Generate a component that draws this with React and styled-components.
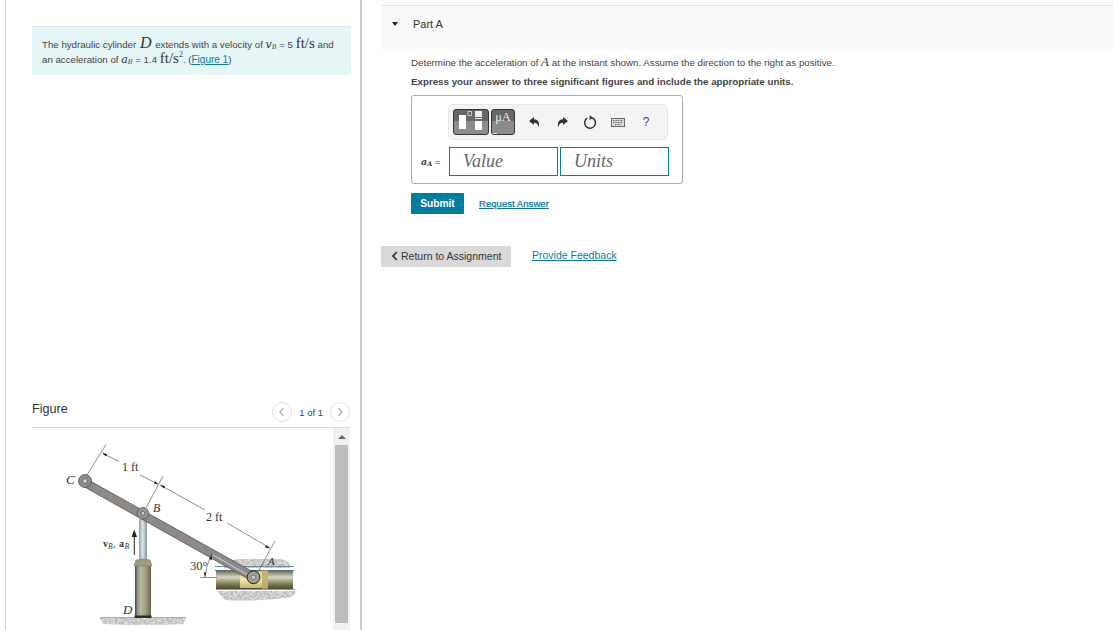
import React from "react";
import styled, { createGlobalStyle } from "styled-components";

const Global = createGlobalStyle`
  html, body { margin: 0; padding: 0; background: #fff; height: 630px; overflow: hidden; }
  body { font-family: "Liberation Sans", Arial, sans-serif; color: #333; }
`;
const Page = styled.div`display: flex; width: 1113px; height: 630px; overflow: hidden;`;
const LeftPane = styled.section`
  margin-left: 5px; width: 357px; height: 630px; box-sizing: border-box; flex: none;
  border-left: 1px solid #d3d7dc; border-right: 2px solid #c5ccd8;
  padding: 26px 9px 0 26px;
`;
const InfoBox = styled.div`
  height: 49px; box-sizing: border-box; background: #e6f5f6; border-top: 1px solid #dfe5e8;
  padding: 10px 10px 0 10px; font-size: 9.7px; line-height: 15px; color: #444; white-space: nowrap;
`;
const MathBig = styled.span`font-family: "Liberation Serif", serif; font-size: ${p => p.$size || "15px"}; font-style: ${p => p.$i ? "italic" : "normal"}; color: #333; margin: 0 ${p => p.$gap || 0}px; line-height: 0;`;
const MathVar = styled.span`font-family: "DejaVu Serif", serif; font-style: italic; font-size: 11px; color: #333; line-height: 0; sub { font-size: 6.5px; vertical-align: -1px; line-height: 0; }`;
const Sup = styled.sup`font-size: 8px; line-height: 0;`;
const Link = styled.a`color: #0a7a9b; text-decoration: underline; font-size: ${p => p.$size || "10px"}; font-weight: 400; -webkit-text-stroke: ${p => p.$bold ? ".25px #0a7a9b" : "0"}; margin-bottom: ${p => p.$lift || 0}px;`;
const FigureHeader = styled.header`
  margin-top: 326px; height: 27px; box-sizing: border-box; display: flex; align-items: flex-start;
  border-bottom: 1px solid #d9d9d9; width: 318px; justify-content: space-between;
`;
const FigureTitle = styled.h2`margin: 1px 0 0; font-size: 12.6px; font-weight: 400; color: #333; line-height: 15px;`;
const Pager = styled.div`display: flex; align-items: center; gap: 7px; font-size: 9.5px; color: #444; margin-top: 1px;`;
const PageBtn = styled.span`
  width: 20px; height: 20px; box-sizing: border-box; border: 1px solid #e0e0e0; border-radius: 50%;
  display: flex; align-items: center; justify-content: center;
`;
const FigureBody = styled.div`display: flex; width: 318px; height: 203px; overflow: hidden;`;
const FigureArea = styled.div`width: 301px; flex: none;`;
const Scrollbar = styled.div`width: 17px; background: #f1f1f1; display: flex; flex-direction: column; align-items: center;`;
const ScrollUp = styled.div`
  margin-top: 7px; width: 0; height: 0; border-left: 4px solid transparent; border-right: 4px solid transparent;
  border-bottom: 4px solid #666;
`;
const ScrollThumb = styled.div`margin-top: 6px; width: 13px; height: 178px; background: #bdbdbd;`;

const RightPane = styled.main`flex: 1; padding: 5px 0 0 19px; min-width: 0;`;
const PartBar = styled.div`
  height: 44px; box-sizing: border-box; background: #f9f9f9; border-top: 1px solid #e6e6e6;
  display: flex; align-items: flex-start; padding: 11px 0 0 11px;
`;
const Caret = styled.span`
  width: 0; height: 0; border-left: 3.5px solid transparent; border-right: 3.5px solid transparent;
  border-top: 4px solid #222; margin-top: 5px;
`;
const PartTitle = styled.h3`margin: 0 0 0 15px; font-size: 11px; font-weight: 400; color: #333; line-height: 14px;`;
const PartBody = styled.div`padding: 6px 0 0 30px;`;
const Prompt = styled.p`margin: 0; height: 15px; font-size: 9.75px; line-height: 15px; color: #444; white-space: nowrap;`;
const Instruction = styled.p`margin: 4px 0 0; font-size: 9.75px; line-height: 15px; font-weight: 700; color: #444; white-space: nowrap;`;
const AnswerBox = styled.div`
  margin-top: 6px; width: 272px; height: 89px; box-sizing: border-box; border: 1px solid #aaa; border-radius: 3px;
  padding: 8px 0 0 36px;
`;
const Toolbar = styled.div`
  width: 220px; height: 36px; box-sizing: border-box; background: #f4f4f4; border: 1px solid #e6e6e6; border-radius: 5px;
  display: flex; align-items: center; padding-left: 4px;
`;
const TplBtn = styled.div`
  width: ${p => p.$w}px; height: 26px; box-sizing: border-box; border: 1px solid #333; border-radius: 3px; margin-right: 2px;
  background: linear-gradient(#666 0, #666 44%, #8c8c8c 44%, #8c8c8c 100%);
  display: flex; align-items: center; justify-content: center; overflow: hidden; flex: none; position: relative;
`;
const MuText = styled.span`font-family: "Liberation Serif", serif; font-size: 12.5px; color: #f0f0f0; margin-top: -9px;`;
const MuMark = styled.span`position: absolute; left: 1px; bottom: 0; width: 4px; height: 1px; background: #eee;`;
const ToolIcon = styled.span`
  width: 28px; height: 26px; flex: none; display: flex; align-items: center; justify-content: center; color: #444;
  font-size: 12px;
`;
const Icons = styled.div`display: flex; margin-left: 3px;`;
const InputRow = styled.div`display: flex; align-items: center; margin-top: 7px; margin-left: -27px;`;
const VarLabel = styled.span`width: 28px; font-size: 9.5px; color: #444; white-space: nowrap; sub { font-size: 6.5px; line-height: 0; vertical-align: -1px; } i { font-family: "DejaVu Serif", serif; font-weight: 700; }`;
const Field = styled.div`
  width: ${p => p.$w}px; height: 29px; box-sizing: border-box; border: 1px solid #0e7c98; margin-right: 2px; flex: none;
  font-family: "Liberation Serif", "DejaVu Serif", serif; font-style: italic; font-size: 18px; color: #666; padding: 3px 0 0 13px; background: #fff;
`;
const SubmitRow = styled.div`display: flex; align-items: center; margin-top: 9px;`;
const Submit = styled.button`
  width: 53px; height: 21px; border: 0; padding: 0; border-radius: 1px; background: #007c9c; color: #fff; font: 700 10.2px "Liberation Sans", sans-serif;
  margin-right: 15px;
`;
const BottomRow = styled.div`display: flex; align-items: center; margin-top: 32px;`;
const ReturnBtn = styled.button`
  width: 130px; height: 21px; border: 0; border-radius: 1px; background: #d9d9d9; color: #333; padding: 0 0 1px 10px;
  font: 400 10.5px "Liberation Sans", sans-serif; display: flex; align-items: center; gap: 2px; margin-right: 21px;
`;

function Diagram() {
  const T = ({ x, y, it, size = 11.5, children, w }) => (
    <text x={x} y={y} fontFamily="'Liberation Serif', serif" fontStyle={it ? "italic" : "normal"} fontSize={size} fontWeight={w} fill="#333">{children}</text>
  );
  return (
    <svg width="301" height="203" viewBox="32 428 301 203" style={{ display: "block" }}>
      <defs>
        <linearGradient id="rod" x1="0" x2="1" y1="0" y2="0">
          <stop offset="0" stopColor="#8fa0a8" /><stop offset=".45" stopColor="#dde5e8" /><stop offset="1" stopColor="#84929a" />
        </linearGradient>
        <linearGradient id="cyl" x1="0" x2="1" y1="0" y2="0">
          <stop offset="0" stopColor="#76765c" /><stop offset=".35" stopColor="#bab8a0" /><stop offset=".7" stopColor="#9c9a7e" /><stop offset="1" stopColor="#66644c" />
        </linearGradient>
        <linearGradient id="track" x1="0" x2="0" y1="0" y2="1">
          <stop offset="0" stopColor="#6e7258" /><stop offset=".35" stopColor="#d7d7c6" /><stop offset=".7" stopColor="#83805a" /><stop offset="1" stopColor="#4e4a2c" />
        </linearGradient>
        <linearGradient id="slide" x1="0" x2="0" y1="0" y2="1">
          <stop offset="0" stopColor="#d9cc8c" /><stop offset=".5" stopColor="#f3e7ae" /><stop offset="1" stopColor="#c9b66c" />
        </linearGradient>
        <filter id="speck" x="-5%" y="-30%" width="110%" height="160%">
          <feGaussianBlur in="SourceGraphic" stdDeviation=".7" result="soft" />
          <feTurbulence type="fractalNoise" baseFrequency="0.45" numOctaves="2" seed="7" result="noise" />
          <feColorMatrix in="noise" values="0 0 0 0 .95  0 0 0 0 .95  0 0 0 0 .95  0 0 0 1.6 -.55" result="light" />
          <feComposite in="light" in2="soft" operator="in" result="spots" />
          <feMerge><feMergeNode in="soft" /><feMergeNode in="spots" /></feMerge>
        </filter>
      </defs>

      <g filter="url(#speck)" fill="#b9b9b9">
        <path d="M100 618 H186 L183 624 Q143 626 103 624 Z" />
        <path d="M224 568 Q226 560 240 559 H280 Q290 560 291 568 Z" />
        <path d="M217 591 H297 L292 597 Q260 602 225 600 Z" />
      </g>
      <rect x="100" y="617" width="86" height="1" fill="#aaa" />
      <rect x="215" y="566" width="79" height="1" fill="#6d8a9a" />
      <rect x="215" y="570" width="79" height="1" fill="#556b78" />
      <rect x="216" y="571" width="77" height="18" fill="url(#track)" />
      <rect x="216" y="589" width="79" height="1" fill="#8d9ba3" />
      <rect x="240" y="571" width="28" height="17" fill="url(#slide)" />
      <rect x="262" y="570" width="6" height="19" fill="#b8a76a" opacity=".8" />

      <rect x="139" y="519" width="8" height="42" fill="url(#rod)" />
      <rect x="135" y="564" width="16" height="52" fill="url(#cyl)" />
      <rect x="135" y="565" width="1.4" height="51" fill="#3c4f86" />
      <path d="M136 560 Q143 558 150 560 L152 566 L134 566 Z" fill="#a09e80" stroke="#77755b" strokeWidth=".5" />
      <rect x="134.5" y="615.5" width="17" height="2.5" fill="#2f2f22" />

      <path d="M83 477 L255 573 L252 581 L81 485 Z" fill="#8e8a87" stroke="#55524f" strokeWidth=".8" />
      <path d="M213 555 L248 575" stroke="#d9d7d3" strokeWidth="1" />
      <circle cx="85" cy="481" r="6.5" fill="#8e8a87" stroke="#55524f" strokeWidth=".8" />
      <circle cx="85" cy="481" r="2.2" fill="#ddd" stroke="#444" strokeWidth=".6" />
      <circle cx="143" cy="513.3" r="5.8" fill="#97938f" stroke="#55524f" strokeWidth=".7" />
      <circle cx="143" cy="513.3" r="1.8" fill="#ddd" stroke="#444" strokeWidth=".6" />
      <circle cx="253.5" cy="577.3" r="6.4" fill="#a09d99" stroke="#222" strokeWidth="1" />
      <circle cx="253.5" cy="577.3" r="2.2" fill="#ccc" stroke="#555" strokeWidth=".6" />

      <g stroke="#444" strokeWidth=".6" fill="none">
        <path d="M87 475 L106 444.5" />
        <path d="M146 508 L163 476" />
        <path d="M258 572 L275 541" />
        <path d="M103 453.5 L119 461.5" />
        <path d="M140 475 L158 484" />
        <path d="M160 485 L205 510" />
        <path d="M227 523 L270 548" />
        <path d="M212 554 Q206 565 205 577" />
        <path d="M200 577.5 L217 577.5" />
      </g>
      <g fill="#222">
        <path d="M102 453 L107 454 L106 456.5 Z" />
        <path d="M158.5 484.5 L154 483.5 L155 481 Z" />
        <path d="M160 485 L165 486 L164 488.5 Z" />
        <path d="M270 548.5 L265 547.5 L266 545 Z" />
        <path d="M211.5 555 L212 560 L209 559 Z" />
        <path d="M205 577 L203.7 572.5 L206.3 572.5 Z" />
      </g>
      <path d="M134.3 555 V535" stroke="#222" strokeWidth="1" />
      <path d="M134.3 529.5 L137 537 L131.6 537 Z" fill="#222" />

      <T x={122} y={471} size={12}>1 ft</T>
      <T x={206} y={521} size={12}>2 ft</T>
      <T x={190} y={570} size={12.5}>30°</T>
      <T x={66} y={484} it size={13}>C</T>
      <T x={153} y={512} it size={12}>B</T>
      <T x={123} y={614} it size={13}>D</T>
      <T x={268} y={565} it size={11}>A</T>
      <T x={103} y={547} size={10} w="700">v</T>
      <T x={108} y={549} size={7.5} it>B</T>
      <T x={113} y={547} size={10}>,</T>
      <T x={119} y={547} size={10} w="700">a</T>
      <T x={124.5} y={549} size={7.5} it>B</T>
    </svg>
  );
}

const Chev = ({ d, c = "#bdbdbd" }) => (
  <svg width="8" height="10" viewBox="0 0 8 10"><path d={d} fill="none" stroke={c} strokeWidth="1.6" /></svg>
);

export default function App() {
  return (
    <Page>
      <Global />
      <LeftPane>
        <InfoBox>
          The hydraulic cylinder <MathBig $i $size="16px" $gap={1}>D</MathBig> extends with a velocity of <MathVar>v<sub>B</sub></MathVar> = 5 <MathBig>ft/s</MathBig> and
          <br />
          an acceleration of <MathVar>a<sub>B</sub></MathVar> = 1.4 <MathBig>ft/s<Sup>2</Sup></MathBig>. (<Link>Figure 1</Link>)
        </InfoBox>
        <FigureHeader>
          <FigureTitle>Figure</FigureTitle>
          <Pager>
            <PageBtn><Chev d="M5.5 1 L2 5 L5.5 9" /></PageBtn>
            <span>1 of 1</span>
            <PageBtn><Chev d="M2.5 1 L6 5 L2.5 9" /></PageBtn>
          </Pager>
        </FigureHeader>
        <FigureBody>
          <FigureArea><Diagram /></FigureArea>
          <Scrollbar><ScrollUp /><ScrollThumb /></Scrollbar>
        </FigureBody>
      </LeftPane>
      <RightPane>
        <PartBar><Caret /><PartTitle>Part A</PartTitle></PartBar>
        <PartBody>
          <Prompt>Determine the acceleration of <MathBig $i $size="13px">A</MathBig> at the instant shown. Assume the direction to the right as positive.</Prompt>
          <Instruction>Express your answer to three significant figures and include the appropriate units.</Instruction>
          <AnswerBox>
            <Toolbar>
              <TplBtn $w={36}>
                <svg width="34" height="24" viewBox="0 0 34 24">
                  <rect x="5" y="5" width="7" height="14" fill="#fff" />
                  <rect x="14" y="1.5" width="3.5" height="4" fill="none" stroke="#ddd" strokeWidth=".8" />
                  <rect x="21" y="1" width="7" height="6" fill="#eee" />
                  <rect x="21" y="8" width="7" height="1" fill="#eee" />
                  <rect x="21" y="11" width="7" height="9" fill="#fff" />
                </svg>
              </TplBtn>
              <TplBtn $w={24}><MuText>μA</MuText><MuMark /></TplBtn>
              <Icons>
                <ToolIcon>
                  <svg width="13" height="13" viewBox="0 0 12 12"><path d="M1 4.5 L5.5 1 V3 C9 3 11 5.5 10 10.5 C9.2 7.5 8 6.3 5.5 6.3 V8.3 Z" fill="#333" /></svg>
                </ToolIcon>
                <ToolIcon>
                  <svg width="13" height="13" viewBox="0 0 12 12"><path d="M11 4.5 L6.5 1 V3 C3 3 1 5.5 2 10.5 C2.8 7.5 4 6.3 6.5 6.3 V8.3 Z" fill="#333" /></svg>
                </ToolIcon>
                <ToolIcon>
                  <svg width="14" height="14" viewBox="0 0 13 13"><path d="M8.5 2.6 A5 5 0 1 1 4 2.9" fill="none" stroke="#333" strokeWidth="1.4" /><path d="M6.3 0 L9.3 2.7 L6 4.6 Z" fill="#333" /></svg>
                </ToolIcon>
                <ToolIcon>
                  <svg width="14" height="9" viewBox="0 0 14 9"><rect x=".5" y=".5" width="13" height="8" fill="#ddd" stroke="#666" /><path d="M2 2.5 H12 M2 4.5 H12 M4 6.5 H10" stroke="#666" strokeDasharray="1 .6" /></svg>
                </ToolIcon>
                <ToolIcon>?</ToolIcon>
              </Icons>
            </Toolbar>
            <InputRow>
              <VarLabel><i>a<sub>A</sub></i> =</VarLabel>
              <Field $w={109}>Value</Field>
              <Field $w={109}>Units</Field>
            </InputRow>
          </AnswerBox>
          <SubmitRow>
            <Submit>Submit</Submit>
            <Link $bold $size="9.6px" $lift={1}>Request Answer</Link>
          </SubmitRow>
        </PartBody>
        <BottomRow>
          <ReturnBtn>
            <svg width="8" height="10" viewBox="0 0 8 10"><path d="M5.8 1 L2 5 L5.8 9" fill="none" stroke="#333" strokeWidth="1.8" /></svg>
            Return to Assignment
          </ReturnBtn>
          <Link $size="10.5px" $lift={3}>Provide Feedback</Link>
        </BottomRow>
      </RightPane>
    </Page>
  );
}
